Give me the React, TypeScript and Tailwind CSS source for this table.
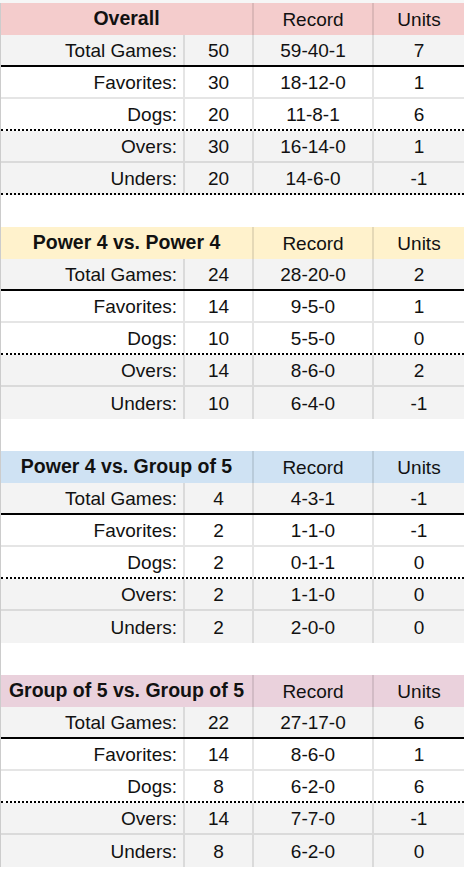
type Line = "grid" | "solid" | "dotted" | "none";

interface Row {
  label: string;
  games: number;
  record: string;
  units: number;
  shaded: boolean;
  line: Line;
}

interface Section {
  title: string;
  headerBg: string;
  rows: Row[];
}

// rows inside a section are the same in every table, only the numbers change
function makeRows(data: [number, string, number][], lastLine: Line): Row[] {
  const labels = ["Total Games:", "Favorites:", "Dogs:", "Overs:", "Unders:"];
  const shaded = [true, false, false, true, true];
  const lines: Line[] = ["solid", "grid", "dotted", "grid", lastLine];
  return data.map(([games, record, units], i) => ({
    label: labels[i],
    games,
    record,
    units,
    shaded: shaded[i],
    line: lines[i],
  }));
}

const sections: Section[] = [
  {
    title: "Overall",
    headerBg: "bg-[#f4cccc]",
    rows: makeRows(
      [
        [50, "59-40-1", 7],
        [30, "18-12-0", 1],
        [20, "11-8-1", 6],
        [30, "16-14-0", 1],
        [20, "14-6-0", -1],
      ],
      "dotted"
    ),
  },
  {
    title: "Power 4 vs. Power 4",
    headerBg: "bg-[#fff2cc]",
    rows: makeRows(
      [
        [24, "28-20-0", 2],
        [14, "9-5-0", 1],
        [10, "5-5-0", 0],
        [14, "8-6-0", 2],
        [10, "6-4-0", -1],
      ],
      "none"
    ),
  },
  {
    title: "Power 4 vs. Group of 5",
    headerBg: "bg-[#cfe2f3]",
    rows: makeRows(
      [
        [4, "4-3-1", -1],
        [2, "1-1-0", -1],
        [2, "0-1-1", 0],
        [2, "1-1-0", 0],
        [2, "2-0-0", 0],
      ],
      "none"
    ),
  },
  {
    title: "Group of 5 vs. Group of 5",
    headerBg: "bg-[#ead1dc]",
    rows: makeRows(
      [
        [22, "27-17-0", 6],
        [14, "8-6-0", 1],
        [8, "6-2-0", 6],
        [14, "7-7-0", -1],
        [8, "6-2-0", 0],
      ],
      "none"
    ),
  },
];

const lineClass: Record<Line, string> = {
  grid: "border-b-2 border-b-black/10",
  solid: "border-b-2 border-b-black",
  dotted: "border-b-2 border-dotted border-b-black",
  none: "",
};

const cell = "flex h-full items-center border-r-2 border-black/10";

function SectionTable({ section }: { section: Section }) {
  return (
    <div>
      <div className={`grid h-8 grid-cols-[253px_120px_90px] ${section.headerBg}`}>
        <div className={`${cell} justify-center text-[19.5px] font-bold`}>{section.title}</div>
        <div className={`${cell} justify-center`}>Record</div>
        <div className="flex h-full items-center justify-center">Units</div>
      </div>
      {section.rows.map((row) => (
        <div
          key={row.label}
          className={`grid h-8 grid-cols-[184px_69px_120px_90px] ${row.shaded ? "bg-[#f3f3f3]" : "bg-white"} ${lineClass[row.line]}`}
        >
          <div className={`${cell} justify-end pr-[6px]`}>{row.label}</div>
          <div className={`${cell} justify-center`}>{row.games}</div>
          <div className={`${cell} justify-center`}>{row.record}</div>
          <div className="flex h-full items-center justify-center">{row.units}</div>
        </div>
      ))}
    </div>
  );
}

export default function App() {
  return (
    <div className="h-[874px] w-[464px] overflow-hidden bg-white font-['Liberation_Sans',Arial,sans-serif] text-[19px] leading-none text-[#111]">
      <div className="h-[3px] bg-[#f6f6f6]" />
      <div className="flex flex-col gap-8 border-l border-black/20">
        {sections.map((s) => (
          <SectionTable key={s.title} section={s} />
        ))}
      </div>
    </div>
  );
}
